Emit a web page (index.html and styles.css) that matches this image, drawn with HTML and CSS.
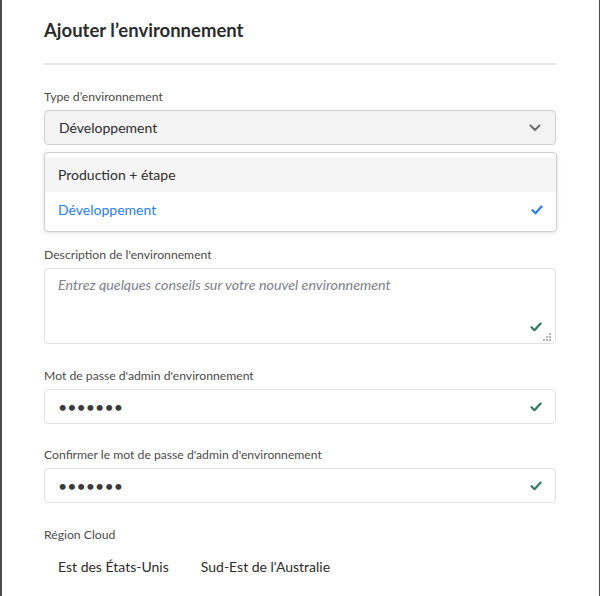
FILE: index.html
```html
<!DOCTYPE html>
<html lang="fr">
<head>
<meta charset="utf-8">
<title>Ajouter l'environnement</title>
<link rel="stylesheet" href="styles.css">
</head>
<body>
<div class="dialog">
  <h1 class="title">Ajouter l’environnement</h1>
  <hr class="divider">

  <div class="field">
    <label class="label">Type d’environnement</label>
    <div class="select">
      <span class="select-value">Développement</span>
      <svg class="chevron" width="12" height="8" viewBox="0 0 12 8"><path d="M1.5 1.5 L6 6 L10.5 1.5" fill="none" stroke="#6e6e6e" stroke-width="2" stroke-linecap="round" stroke-linejoin="round"/></svg>
    </div>
    <ul class="menu">
      <li class="menu-item hover">Production + étape</li>
      <li class="menu-item selected">Développement
        <svg class="check" width="12" height="10" viewBox="0 0 12 10"><path d="M1.5 5.2 L4.5 8.2 L10.6 1.6" fill="none" stroke="#2680eb" stroke-width="2.2" stroke-linecap="round" stroke-linejoin="round"/></svg>
      </li>
    </ul>
  </div>

  <div class="field desc">
    <label class="label">Description de l'environnement</label>
    <div class="textarea">
      <span class="placeholder">Entrez quelques conseils sur votre nouvel environnement</span>
      <svg class="valid" width="12" height="10" viewBox="0 0 12 10"><path d="M1.5 5.2 L4.5 8.2 L10.6 1.6" fill="none" stroke="#2d7d5e" stroke-width="2.2" stroke-linecap="round" stroke-linejoin="round"/></svg>
      <svg class="grip" width="9" height="9" viewBox="0 0 9 9" fill="#b3b3b3"><rect x="6" y="0" width="2" height="2"/><rect x="3" y="3" width="2" height="2"/><rect x="6" y="3" width="2" height="2"/><rect x="0" y="6" width="2" height="2"/><rect x="3" y="6" width="2" height="2"/><rect x="6" y="6" width="2" height="2"/></svg>
    </div>
  </div>

  <div class="field pw">
    <label class="label">Mot de passe d'admin d'environnement</label>
    <div class="input">
      <span class="dots">•••••••</span>
      <svg class="valid-inline" width="12" height="10" viewBox="0 0 12 10"><path d="M1.5 5.2 L4.5 8.2 L10.6 1.6" fill="none" stroke="#2d7d5e" stroke-width="2.2" stroke-linecap="round" stroke-linejoin="round"/></svg>
    </div>
  </div>

  <div class="field pw pw2">
    <label class="label">Confirmer le mot de passe d'admin d'environnement</label>
    <div class="input">
      <span class="dots">•••••••</span>
      <svg class="valid-inline" width="12" height="10" viewBox="0 0 12 10"><path d="M1.5 5.2 L4.5 8.2 L10.6 1.6" fill="none" stroke="#2d7d5e" stroke-width="2.2" stroke-linecap="round" stroke-linejoin="round"/></svg>
    </div>
  </div>

  <div class="field region">
    <label class="label">Région Cloud</label>
    <div class="options">
      <button class="option">Est des États-Unis</button>
      <button class="option">Sud-Est de l'Australie</button>
    </div>
  </div>
</div>
</body>
</html>
```

FILE: styles.css
```css
* { box-sizing: border-box; }
html, body { margin: 0; padding: 0; background: #fff; }
body {
  font-family: Lato, "Open Sans", sans-serif;
  color: #2c2c2c;
  width: 600px;
  height: 596px;
  overflow: hidden;
}
.dialog {
  height: 596px;
  border-left: 2px solid #4b4b4b;
  border-right: 1px solid #4b4b4b;
  padding: 18px 43px 0 42px;
}
.title {
  margin: 0;
  font-size: 18.5px;
  line-height: 24px;
  font-weight: 700;
  color: #2c2c2c;
}
.divider {
  margin: 21px 0 0;
  border: 0;
  height: 2px;
  background: #e6e6e6;
}
.field { margin-top: 23px; }
.label {
  display: block;
  font-size: 12.2px;
  line-height: 18px;
  color: #4b4b4b;
  margin-bottom: 4px;
}
.select {
  height: 35px;
  display: flex;
  align-items: center;
  justify-content: space-between;
  padding: 0 14px;
  background: #f3f3f3;
  border: 1px solid #d0d0d0;
  border-radius: 4px;
}
.select-value { font-size: 14px; color: #2c2c2c; }
.menu {
  list-style: none;
  margin: 7px 0 0;
  padding: 4px 0;
  border: 1px solid #cfcfcf;
  border-radius: 4px;
  box-shadow: 0 1px 4px rgba(0,0,0,0.12);
  background: #fff;
  width: 513px;
}
.menu-item {
  height: 35px;
  display: flex;
  align-items: center;
  justify-content: space-between;
  padding: 0 13px;
  font-size: 14px;
  color: #2c2c2c;
}
.menu-item.hover { background: #f5f5f5; }
.menu-item.selected { color: #2680eb; }
.desc { margin-top: 14px; }
.textarea {
  position: relative;
  height: 76px;
  border: 1px solid #e1e1e1;
  border-radius: 4px;
  padding: 5px 13px;
}
.placeholder {
  font-size: 14.3px;
  font-style: italic;
  color: #7d818a;
}
.valid { position: absolute; right: 13px; bottom: 11px; }
.grip { position: absolute; right: 3px; bottom: 1px; }
.pw { margin-top: 23px; }
.pw2 { margin-top: 22px; }
.input {
  height: 35px;
  display: flex;
  align-items: center;
  justify-content: space-between;
  padding: 0 13px;
  border: 1px solid #e1e1e1;
  border-radius: 4px;
}
.dots {
  font-size: 16px;
  letter-spacing: 0;
  color: #3a3a3a;
  line-height: 1;
}
.region { margin-top: 23px; }
.options { display: flex; gap: 4px; margin-top: 6px; }
.option {
  font-family: inherit;
  font-size: 14px;
  color: #2c2c2c;
  background: transparent;
  border: 0;
  padding: 0 14px;
  height: 32px;
  cursor: pointer;
}
```
